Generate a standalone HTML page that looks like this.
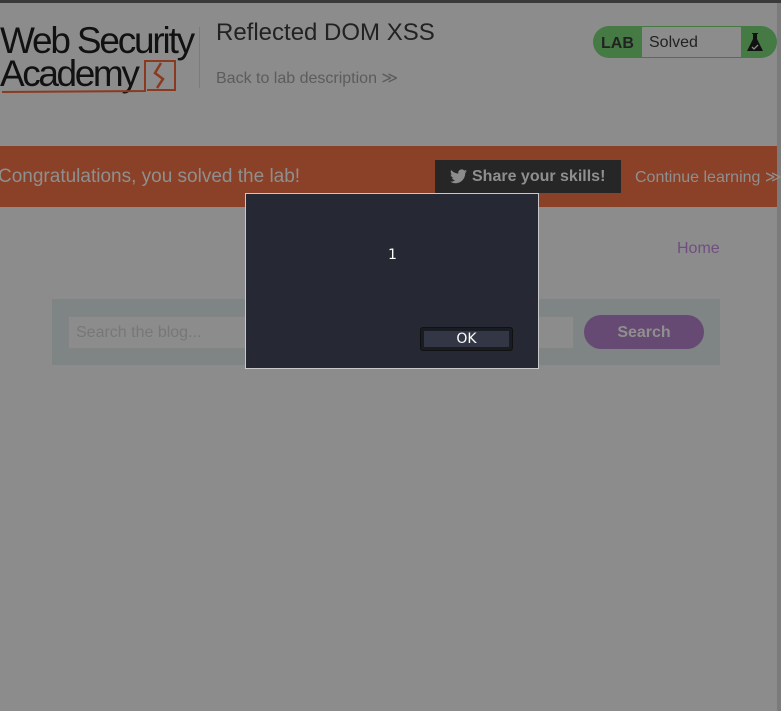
<!DOCTYPE html>
<html><head><meta charset="utf-8"><style>
*{margin:0;padding:0;box-sizing:border-box}
html,body{width:781px;height:711px;overflow:hidden;background:#8c8c8c;font-family:"Liberation Sans",sans-serif;position:relative}
.a{position:absolute}
</style></head><body>
<div class="a" style="left:0;top:0;width:781px;height:3px;background:#3a3a3a"></div>
<div class="a" style="left:777px;top:3px;width:4px;height:708px;background:#7b7b7b"></div>
<div class="a" style="left:0;top:22px;font-size:37px;letter-spacing:-2.2px;color:#111;line-height:37px">Web Security</div>
<div class="a" style="left:0;top:55px;font-size:37px;letter-spacing:-2.4px;color:#111;line-height:37px">Academy</div>
<svg class="a" style="left:0;top:58px" width="180" height="40">
<path d="M2 34 L145 33 L145 3 L175 3 L175 32 L147 32" fill="none" stroke="#8b3a1f" stroke-width="2"/>
<path d="M161 5 L155 15 L163 21 L157 30" fill="none" stroke="#8b3a1f" stroke-width="2.5"/>
</svg>
<div class="a" style="left:199px;top:27px;width:1px;height:61px;background:#7c7c7c"></div>
<div class="a" style="left:216px;top:19px;font-size:24px;color:#222">Reflected DOM XSS</div>
<div class="a" style="left:216px;top:68px;font-size:16px;color:#5c5c5c">Back to lab description ≫</div>
<div class="a" style="left:593px;top:26px;width:184px;height:32px;border-radius:16px;background:#467a45"></div>
<div class="a" style="left:601px;top:35px;font-size:16px;font-weight:bold;color:#222">LAB</div>
<div class="a" style="left:642px;top:27px;width:99px;height:30px;background:#8c8c8c"></div>
<div class="a" style="left:649px;top:34px;font-size:16px;color:#222">Solved</div>
<svg class="a" style="left:745px;top:31px" width="20" height="22"><path d="M7 2h6v1h-1v5l6 12H2L8 8V3H7z" fill="#111"/><path d="M7 16l2 2 4-4" stroke="#888" stroke-width="1.3" fill="none"/></svg>
<div class="a" style="left:0;top:146px;width:777px;height:61px;background:#8b4127"></div>
<div class="a" style="left:-2px;top:166px;font-size:19px;color:#8f8f8f">Congratulations, you solved the lab!</div>
<div class="a" style="left:435px;top:160px;width:186px;height:33px;background:#262626"></div>
<svg class="a" style="left:450px;top:169px" width="17" height="15" viewBox="0 0 24 20"><path d="M24 2.4a10 10 0 0 1-2.8.8A5 5 0 0 0 23.3.4a10 10 0 0 1-3.1 1.2A4.9 4.9 0 0 0 11.8 6 14 14 0 0 1 1.7.9a4.9 4.9 0 0 0 1.5 6.6A4.9 4.9 0 0 1 1 6.9a4.9 4.9 0 0 0 3.9 4.8 5 5 0 0 1-2.2.1 4.9 4.9 0 0 0 4.6 3.4A9.9 9.9 0 0 1 0 17.3 14 14 0 0 0 7.5 19.5c9 0 14-7.5 14-14v-.6A10 10 0 0 0 24 2.4z" fill="#8c8c8c"/></svg>
<div class="a" style="left:472px;top:168px;font-size:16px;font-weight:bold;color:#8f8f8f">Share your skills!</div>
<div class="a" style="left:635px;top:167px;font-size:16px;color:#8f8f8f;white-space:nowrap">Continue learning ≫</div>
<div class="a" style="left:677px;top:240px;font-size:16px;color:#6f4f80">Home</div>
<div class="a" style="left:52px;top:299px;width:668px;height:66px;background:#7f8484"></div>
<div class="a" style="left:68px;top:316px;width:506px;height:33px;background:#8c8c8c;border:1px solid #838585"></div>
<div class="a" style="left:76px;top:324px;font-size:16px;color:#767878">Search the blog...</div>
<div class="a" style="left:584px;top:315px;width:120px;height:34px;border-radius:17px;background:#664a73"></div>
<div class="a" style="left:584px;top:324px;width:120px;text-align:center;font-size:16px;font-weight:bold;color:#8f8f8f">Search</div>
<div class="a" style="left:245px;top:193px;width:294px;height:176px;background:#262834;border:1px solid #c8c8c8"></div>
<div class="a" style="left:388px;top:247px;font-size:14px;color:#fff;font-family:'DejaVu Sans',sans-serif">1</div>
<div class="a" style="left:420px;top:327px;width:93px;height:24px;background:#1a1c24;border-radius:3px;border:1px solid #111"></div>
<div class="a" style="left:424px;top:331px;width:85px;height:16px;background:#333645"></div>
<div class="a" style="left:420px;top:331px;width:93px;text-align:center;font-size:14px;color:#fff;font-family:'DejaVu Sans',sans-serif">OK</div>
</body></html>
